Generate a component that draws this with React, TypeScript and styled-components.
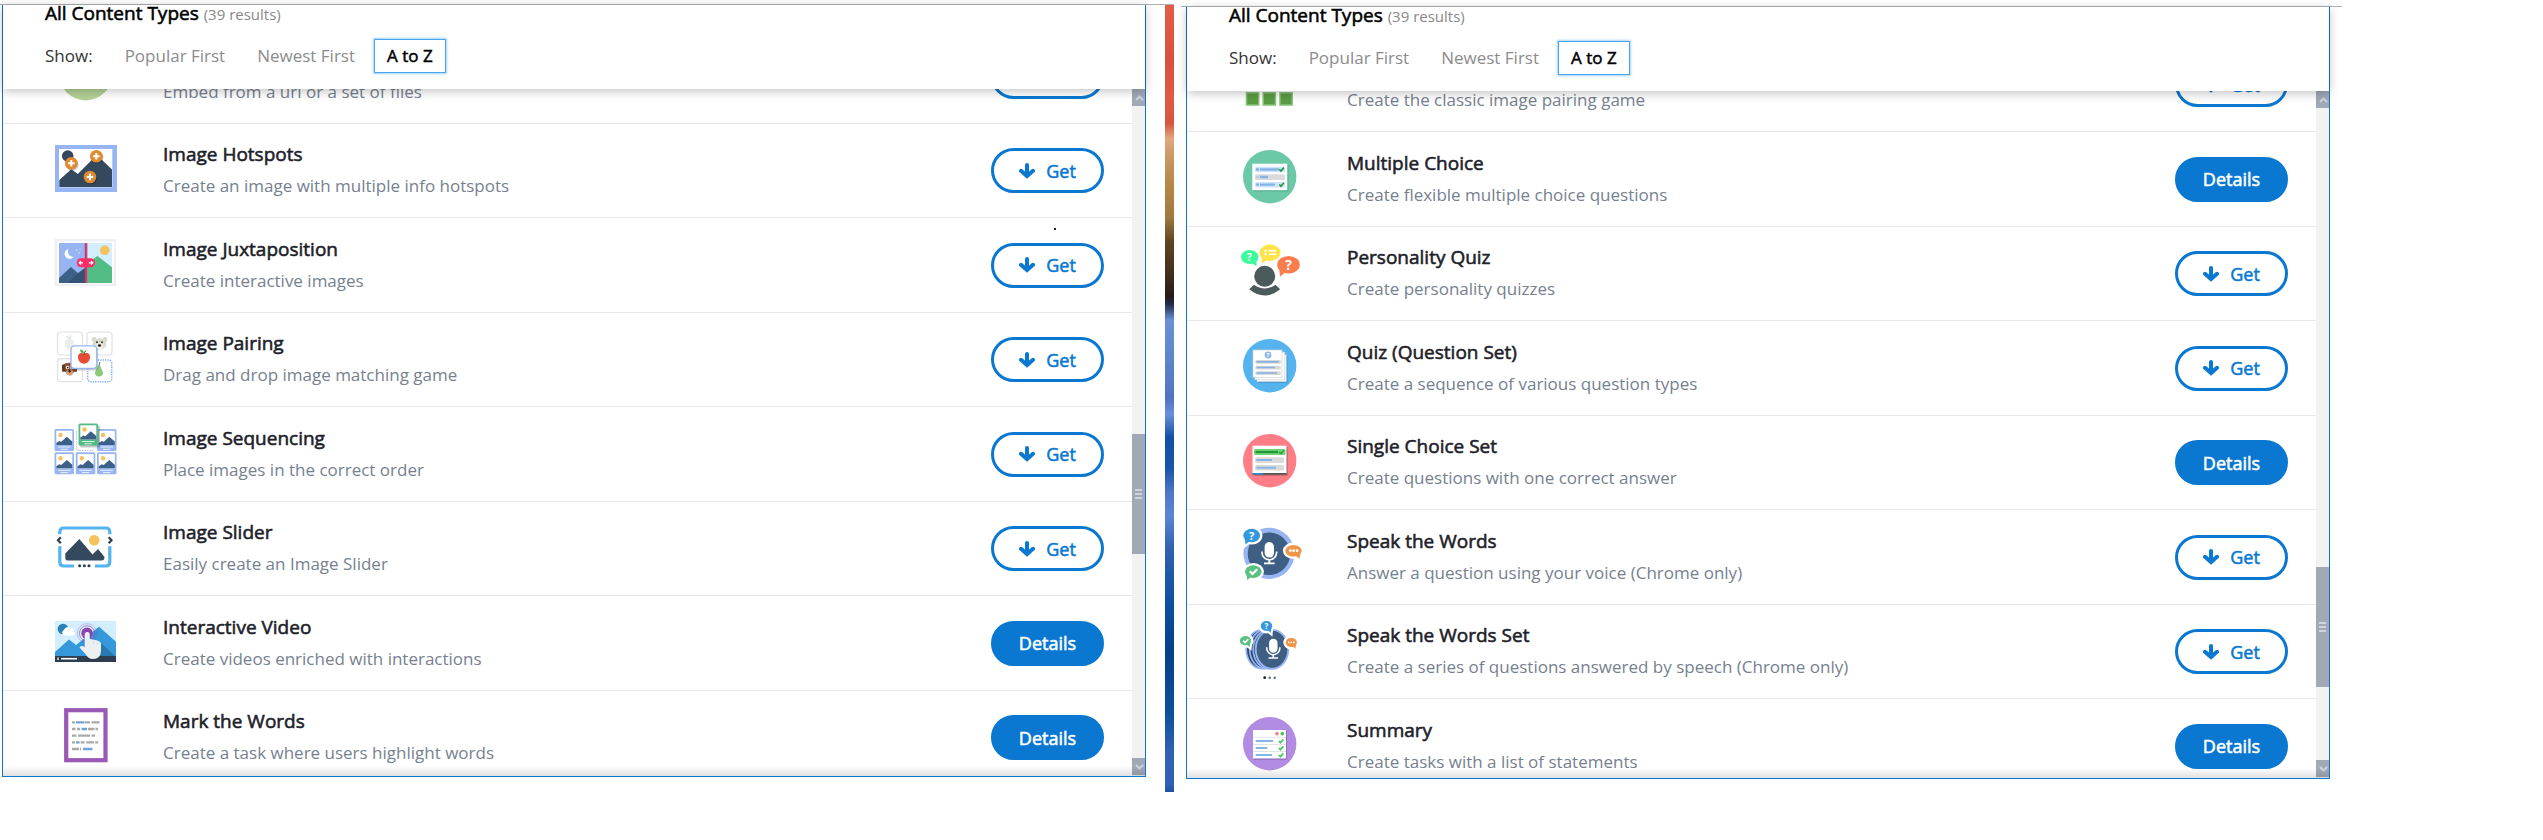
import React from 'react';
import styled, { createGlobalStyle, css } from 'styled-components';

const BLUE = '#0a78d1';
const SKY = '#97b5f3';
const NAVY = '#34495e';
const SUN = '#f5c25c';

const GlobalStyle = createGlobalStyle`
  *, *::before, *::after { box-sizing: border-box; }
  body {
    margin: 0;
    background: #fff;
    font-family: "Open Sans", "Noto Sans", sans-serif;
    color: #1d2129;
  }
  h2, h3, p, ul { margin: 0; padding: 0; }
  button { font-family: inherit; margin: 0; cursor: pointer; }
`;

/* Regular glyphs thickened by a thin outline, lighter than the semibold cut. */
const emphasis = css`
  font-weight: 400;
  -webkit-text-stroke: 0.03em currentColor;
`;

/* ---------- page frame ---------- */

const Page = styled.main`
  display: grid;
  grid-template-columns: 1174fr 7px 1161fr 201fr;
  height: 100vh;
  padding: 4px 0 48px;
`;

const Shot = styled.section`
  display: flex;
  min-width: 0;
  min-height: 0;
  border-top: 1px solid #b0b0b0;
`;

const LeftShot = styled(Shot)`
  grid-column: 1;
  padding-left: 2px;
`;

const RightShot = styled(Shot)`
  grid-column: 3;
  margin: 2px 0 -2px;
  padding: 0 12px 0 5px;
`;

const PhotoEdge = styled.div`
  width: 9px;
  margin-left: 19px;
  background: linear-gradient(
    to bottom,
    #e55c45 0%, #d9503f 7%, #e05a45 12%, #d6553f 15%, #e2a880 17%, #cc9a66 19%,
    #b58545 23%, #a07a40 27%, #5f4520 30%, #43301c 34%, #281a1b 37%, #1f2c48 38%,
    #6a90d5 40%, #5f88cc 44%, #5075c0 50%, #6a90dc 52%, #0f50a2 55%, #1a56a8 59%,
    #5078c8 62%, #5a85d5 65%, #3062b0 69%, #0c50a0 76%, #04408a 82%, #0c509a 90%,
    #3062b4 95%, #2f60b5 99%, #2050a0 100%
  );
`;

/* ---------- content type browser ---------- */

const Panel = styled.div`
  position: relative;
  display: flex;
  flex: 1;
  flex-direction: column;
  min-width: 0;
  margin-bottom: 15px;
  border: 1px solid ${BLUE};
  border-top: 0;

  &::after {
    content: '';
    position: absolute;
    inset: auto 0 0;
    height: 10px;
    background: linear-gradient(to bottom, rgba(0, 0, 0, 0), rgba(0, 0, 0, 0.12));
    pointer-events: none;
  }
`;

const Header = styled.header`
  position: relative;
  z-index: 1;
  padding: 0 42px 16px;
  background: #fff;
  box-shadow: 0 2px 10px rgba(0, 0, 0, 0.25);
`;

const Heading = styled.h2`
  height: 16px;
  font-size: 19px;
  line-height: 16px;
  color: #000;
  ${emphasis}
`;

const Count = styled.span`
  font-size: 15px;
  line-height: 12px;
  color: #888;
  -webkit-text-stroke: 0;
`;

const SortBar = styled.div`
  display: flex;
  align-items: center;
  gap: 6px;
  margin-top: 18px;
  font-size: 17px;
  line-height: 24px;
`;

const SortLabel = styled.span`
  margin-right: 13px;
  color: #333;
`;

const SortButton = styled.button<{ $active?: boolean }>`
  height: 34px;
  padding: 0 12px;
  border: 1px solid transparent;
  background: none;
  font-size: 17px;
  line-height: 24px;
  color: #8c8c8c;
  ${({ $active }) =>
    $active &&
    css`
      border-color: #4aa5f0;
      box-shadow: 0 0 2px 1px #a5d3fa;
      color: #000;
      ${emphasis}
    `}
`;

const Viewport = styled.div`
  display: flex;
  flex: 1;
  min-height: 0;
  overflow: hidden;
`;

const List = styled.ul<{ $offset: number; $rows: string }>`
  display: grid;
  grid-auto-rows: ${({ $rows }) => $rows};
  flex: 1;
  min-width: 0;
  margin-top: ${({ $offset }) => -$offset}px;
  list-style: none;
`;

const Row = styled.li`
  display: flex;
  align-items: center;
  padding: 0 28px 0 52px;
  border-bottom: 1px solid #e9e9eb;
`;

const Icon = styled.svg`
  flex: none;
  width: 62px;
  height: 62px;
  margin: 0 46px 4px 0;
  overflow: visible;
`;

const Info = styled.div`
  flex: 1;
  min-width: 0;
`;

const Title = styled.h3`
  font-size: 19px;
  line-height: 30px;
  color: #1d2129;
  ${emphasis}
`;

const Description = styled.p`
  font-size: 17px;
  line-height: 33px;
  color: #76818f;
`;

const Action = styled.button<{ $filled?: boolean }>`
  display: flex;
  align-items: center;
  justify-content: center;
  gap: 11px;
  width: 113px;
  height: 45px;
  padding: 0;
  border: 3px solid ${BLUE};
  border-radius: 23px;
  background: ${({ $filled }) => ($filled ? BLUE : '#fff')};
  font-size: 18px;
  color: ${({ $filled }) => ($filled ? '#fff' : BLUE)};
  ${emphasis}
`;

const StrayDot = styled.i`
  position: absolute;
  top: 223px;
  right: 89px;
  width: 2px;
  height: 2px;
  background: #222;
`;

/* ---------- scroll bar ---------- */

const Scrollbar = styled.div`
  display: flex;
  flex-direction: column;
  width: 13px;
  padding-bottom: 1px;
  background: #f2f2f2;
`;

const ScrollButton = styled.button`
  display: flex;
  align-items: center;
  justify-content: flex-end;
  width: 13px;
  height: 17px;
  padding: 0 1px;
  border: 0;
  background: #a2a9b5;
`;

const Track = styled.div<{ $grow: number }>`
  flex: ${({ $grow }) => $grow} 1 0;
`;

const Thumb = styled.div`
  display: flex;
  flex: 120 1 0;
  flex-direction: column;
  align-items: center;
  justify-content: center;
  gap: 2px;
  background: #a2a9b5;
`;

const Grip = styled.span`
  width: 7px;
  height: 2px;
  background: #ced3de;
`;

/* ---------- icons ---------- */

const Plus = ({ x, y }: { x: number; y: number }) => (
  <g>
    <circle cx={x + 0.7} cy={y + 0.9} r="6.4" fill="#000" opacity=".25" />
    <circle cx={x} cy={y} r="6.3" fill="#e08a32" />
    <path d={`M${x - 3.3} ${y}h6.6M${x} ${y - 3.3}v6.6`} stroke="#fff" strokeWidth="2" />
  </g>
);

const Check = ({ x, y, c = '#fff', w = 1.6 }: { x: number; y: number; c?: string; w?: number }) => (
  <path d={`M${x - 2.2} ${y}l1.6 1.7 3-3.4`} fill="none" stroke={c} strokeWidth={w} />
);

const Mark = ({ x, y, size, c = '#fff' }: { x: number; y: number; size: number; c?: string }) => (
  <text x={x} y={y} fontSize={size} fontWeight="700" textAnchor="middle" fill={c}>?</text>
);

const Disc = ({ c }: { c: string }) => <circle cx="30.7" cy="30.7" r="26.7" fill={c} />;

const Bubble = ({ x, y, rx, ry, c, tail, ring }: {
  x: number; y: number; rx: number; ry: number; c: string; tail: 'l' | 'r'; ring?: boolean;
}) => {
  const s = tail === 'l' ? -1 : 1;
  const d = `M${x} ${y + ry * 0.6}L${x + s * rx * 0.75} ${y + ry * 1.35}L${x + s * rx * 0.85} ${y}Z`;
  return (
    <g>
      {ring && <ellipse cx={x} cy={y} rx={rx + 2.4} ry={ry + 2.4} fill="#fff" />}
      {ring && <path d={d} fill="#fff" stroke="#fff" strokeWidth="4" />}
      <path d={d} fill={c} />
      <ellipse cx={x} cy={y} rx={rx} ry={ry} fill={c} />
    </g>
  );
};

const Photo = ({ x, y, c = SKY }: { x: number; y: number; c?: string }) => (
  <g transform={`translate(${x} ${y})`}>
    <rect width="19.5" height="22" rx="1.5" fill={c} />
    <rect x="1.8" y="1.8" width="16" height="14.2" fill="#fff" />
    <circle cx="6" cy="6" r="2.2" fill={SUN} />
    <path d="M1.8 14l3-2 2 .8 5.5-5 5.5 4.6V16h-16z" fill="#3d6086" />
    <path d="M3.5 18h12.5M6 20.3h7.5" stroke="#fff" strokeWidth="1" opacity=".8" />
  </g>
);

const Mic = ({ x, y, k }: { x: number; y: number; k: number }) => (
  <g transform={`translate(${x} ${y}) scale(${k})`} fill="none" stroke="#fff">
    <rect x="-4.7" y="0" width="9.4" height="15.6" rx="4.7" fill="#fff" stroke="none" />
    <path d="M-7.3 9.5v1a7.3 7.3 0 0 0 14.6 0v-1" strokeWidth="1.7" />
    <path d="M0 17.8v3.5M-5.3 21.4h10.6" strokeWidth="1.8" />
  </g>
);

const Dots = ({ x, y, gap, r, c }: { x: number; y: number; gap: number; r: number; c: string }) => (
  <g fill={c}>
    <circle cx={x - gap} cy={y} r={r} />
    <circle cx={x} cy={y} r={r} />
    <circle cx={x + gap} cy={y} r={r} />
  </g>
);

const art: Record<string, React.ReactNode> = {
  iframe: <Disc c="#b3d195" />,
  hotspots: (
    <>
      <rect x="0" y="7" width="62" height="47" fill={SKY} />
      <rect x="4" y="11" width="53.3" height="38.3" fill="#fff" />
      <circle cx="12.7" cy="18" r="5.8" fill={NAVY} />
      <path d="M4.3 42L16.3 31.3l6.5 4.6L41.7 17 57 31.5V49H4.3z" fill={NAVY} />
      <Plus x={16.3} y={25.3} />
      <Plus x={41.3} y={18.3} />
      <Plus x={35} y={39} />
    </>
  ),
  juxtaposition: (
    <>
      <rect x="-.5" y="7" width="61.5" height="47" fill="#eff0f6" />
      <rect x="2.2" y="9.5" width="56.5" height="42.2" fill="#fff" />
      <rect x="4" y="11" width="27" height="40" fill={SKY} />
      <rect x="31" y="11" width="26" height="40" fill="#d3efff" />
      <path d="M13.5 17a5 5 0 1 0 5 8 5.5 5.5 0 0 1-5-8z" fill="#fff" />
      <g fill="#e4ecfc">
        <circle cx="21.5" cy="18" r=".8" />
        <circle cx="24" cy="21" r=".7" />
        <circle cx="25" cy="17" r=".5" />
      </g>
      <circle cx="49.7" cy="18.3" r="4.8" fill={SUN} />
      <path d="M4 46l12-11 7 6.3 7.5-5.5V51H4z" fill="#3d6086" />
      <path d="M13 51l10-9.7 7.5-5.5V51z" fill="#345276" />
      <path d="M31.5 32l11-8L57 35.3V51H31.5z" fill="#52bc85" />
      <path d="M31.8 11v40" stroke="#888" strokeWidth="2" opacity=".6" />
      <path d="M30.8 11v40" stroke="#e02860" strokeWidth="2" />
      <rect x="21.7" y="26.3" width="18.4" height="9" rx="4.5" fill="#ff2d64" />
      <path d="M28 30.8h-3.8M26 29l-1.8 1.8 1.8 1.8M33.8 30.8h3.8M36 29l1.8 1.8-1.8 1.8" fill="none" stroke="#fff" strokeWidth="1.2" />
    </>
  ),
  pairing: (
    <>
      <g fill="#fff" stroke="#e0e0e0" strokeWidth="1.2">
        <rect x="2.5" y="5" width="25" height="23" rx="3.5" />
        <rect x="32" y="5" width="25" height="23" rx="3.5" />
        <rect x="2.5" y="31.7" width="25" height="23" rx="3.5" />
      </g>
      <ellipse cx="14.5" cy="17" rx="5" ry="5.3" fill="#eceeec" />
      <path d="M14.5 12l-3-3M14.5 12l1.5-3.5" stroke="#dfe4df" strokeWidth="1.6" />
      <g fill="#d9dad0">
        <circle cx="39" cy="12.5" r="2.4" />
        <circle cx="50" cy="12.5" r="2.4" />
        <ellipse cx="44.5" cy="17" rx="6.8" ry="5.8" />
      </g>
      <ellipse cx="44.5" cy="19.5" rx="3.4" ry="3.2" fill="#f3f3ec" />
      <g fill="#222">
        <circle cx="42" cy="15.2" r=".9" />
        <circle cx="47" cy="15.2" r=".9" />
        <ellipse cx="44.5" cy="18.5" rx="1.7" ry="1.2" />
      </g>
      <path d="M7 38q7-4.5 15 0v6l-3 1q-4 7-8.5 0L7 44z" fill="#8d5132" />
      <path d="M7 38h3v6l-2.5 1zM22 38h-3v6l2.5 1z" fill="#64371f" />
      <g fill="#fff"><circle cx="12.5" cy="40.5" r="1.7" /><circle cx="16.7" cy="40.5" r="1.7" /></g>
      <g fill="#222"><circle cx="12.7" cy="40.6" r=".9" /><circle cx="16.5" cy="40.6" r=".9" /></g>
      <ellipse cx="14.6" cy="45.5" rx="3.6" ry="2.6" fill="#d6a380" />
      <circle cx="14.6" cy="44.2" r="1.2" fill="#2c1a14" />
      <rect x="32.7" y="33" width="24" height="21.7" rx="3" fill="#fff" stroke="#7fb0ea" strokeWidth="1.5" strokeDasharray="1.3 1.1" />
      <path d="M44 38.5c2 0 2 3 3 4.5 2.5 4 0 6.5-3 6.5s-5.5-2.5-3-6.5c1-1.5 1-4.5 3-4.5z" fill="#8cc979" />
      <path d="M44 39l.8-4" stroke="#4f8a45" strokeWidth="1" />
      <rect x="16.8" y="20" width="26.4" height="23.4" rx="3.5" fill="#000" opacity=".18" />
      <rect x="16" y="18.9" width="25.8" height="22.6" rx="3.5" fill="#fff" stroke={SKY} strokeWidth="1.4" />
      <path d="M29 27c3-2 6-.5 6 3 0 4-3 6.7-6 6.7s-6-2.7-6-6.7c0-3.5 3-5 6-3z" fill="#e84c37" />
      <path d="M29 28q0-3 2-4.5" fill="none" stroke="#5b3a26" strokeWidth="1" />
      <path d="M29 26.5q-3.8-.2-4-4 3.8.2 4 4z" fill="#56b357" />
    </>
  ),
  sequencing: (
    <>
      <Photo x={-0.5} y={8} />
      <Photo x={42} y={8} />
      <path d="M21.5 10v19.5h18" fill="none" stroke="#c4c4c4" strokeDasharray="1.5 1" />
      <Photo x={-0.5} y={31.3} />
      <Photo x={20.8} y={31.3} />
      <Photo x={42} y={31.3} />
      <rect x="25" y="4.5" width="20" height="22" rx="1.5" fill="#000" opacity=".22" />
      <Photo x={23.5} y={2.5} c="#52bc85" />
    </>
  ),
  slider: (
    <>
      <g fill="none" stroke="#55b3ee" strokeWidth="3.2">
        <path d="M4.8 18.3V16q0-4 4-4h42q4 0 4 4v2.3" />
        <path d="M4.8 30.3V46q0 4 4 4H19M54.8 30.3V46q0 4-4 4H40" />
      </g>
      <path d="M5.8 21.3L3 24.3l2.8 3M53.7 21.3l2.8 3-2.8 3" fill="none" stroke="#2c3e50" strokeWidth="2.2" />
      <path d="M10.3 37.5L24.3 23 37.5 38.5 43 33l6.5 8q0 3.5-3 3.5H13q-2.7 0-2.7-2.5z" fill={NAVY} />
      <circle cx="39.2" cy="24.3" r="5.3" fill={SUN} />
      <Dots x={29.3} y={49.7} gap={4.7} r={1.5} c="#2c3e50" />
    </>
  ),
  video: (
    <>
      <rect x="0" y="11" width="61" height="41" fill="#d3efff" />
      <path d="M0 42l14-12.5 7 5.5L44 16.7l17 15V47H0z" fill="#3498db" />
      <path d="M46 33l15 14H40z" fill="#2877ad" />
      <rect x="0" y="46" width="61" height="6" fill="#2c3e50" />
      <path d="M6 48.7h16" stroke="#fff" strokeWidth="1.6" />
      <path d="M3 47.5v2.6" stroke="#fff" strokeWidth="1.3" />
      <circle cx="8" cy="19" r="5.3" fill="#2980b9" />
      <path d="M9 25.5a3 3 0 0 1 0-5.5 3.8 3.8 0 0 1 6.5-1.5 3 3 0 0 1 3.5 3 2.2 2.2 0 0 1-.5 4z" fill="#fff" />
      <g fill="none" stroke="#8e44ad">
        <circle cx="32" cy="23.3" r="9.7" opacity=".3" />
        <circle cx="32" cy="23.3" r="7.6" opacity=".6" />
      </g>
      <circle cx="32" cy="23.3" r="5.7" fill="#8e44ad" />
      <path d="M29.7 24.5a2.5 2.5 0 0 1 5 0V29q10 1 11.3 4v8q-.5 8-8 8-5 0-7.5-5l-6-6.5q1-2.5 4.5-1l.7 1z" fill="#ecf0f1" />
      <path d="M38.5 31v3M42.3 32v3" stroke="#d5dadd" strokeWidth=".8" />
    </>
  ),
  words: (
    <>
      <rect x="11.2" y="5.2" width="39.3" height="50" fill="#fff" stroke="#9b59b6" strokeWidth="4.2" />
      <g stroke="#a9a9a9" strokeWidth="2.3">
        <path d="M17 17.3h28" strokeDasharray="3 10 5 1.5 8 3" />
        <path d="M17 24h26" strokeDasharray="3.5 1.5 3 8 6.5 1" />
        <path d="M17 30.7h23" strokeDasharray="4.5 1.5 12 1.5" />
        <path d="M17 37.3h27.5" strokeDasharray="3 5.7 4 1.5 8 1" />
        <path d="M17 44h9" strokeDasharray="7 1" />
      </g>
      <path d="M21 17.3h8.5M26.5 24h5.5M21 37.3h3.5M28 44h9.5" stroke="#6fa3d8" strokeWidth="2.3" />
    </>
  ),
  memory: (
    <g fill="#5a9c43" stroke="#86c276" strokeWidth="1.5">
      {[7.5, 24.2, 41].map((x) => (
        <React.Fragment key={x}>
          <rect x={x} y="8" width="12.2" height="12.2" />
          <rect x={x} y="24.4" width="12.2" height="12.2" />
          <rect x={x} y="40.8" width="12.2" height="12.2" />
        </React.Fragment>
      ))}
    </g>
  ),
  multiple: (
    <>
      <Disc c="#6cc9a8" />
      <rect x="14.5" y="19" width="35" height="26.5" fill="#4f9f83" opacity=".6" />
      <rect x="13.3" y="17.7" width="35" height="26.5" fill="#fff" />
      <rect x="16" y="20.8" width="30" height="5.4" rx="1.5" fill="#cfe4fa" />
      <rect x="16" y="28.3" width="30" height="5.6" rx="1.5" fill="#dadada" />
      <rect x="16" y="36" width="30" height="5.4" rx="1.5" fill="#cfe4fa" />
      <path d="M17 23.5h3M21 23.5h19M21 31h8M17 38.7h3M21 38.7h15" stroke="#86b4e6" strokeWidth="2.3" />
      <path d="M17.2 31h2.5" stroke="#b9c9dc" strokeWidth="2" />
      <Check x={42.5} y={23.3} c="#1f9a32" />
      <Check x={42.5} y={38.5} c="#1f9a32" />
    </>
  ),
  personality: (
    <>
      <Bubble x={10.7} y={16} rx={8.7} ry={6.9} c="#3dfa9a" tail="r" />
      <Bubble x={31} y={11.7} rx={10.5} ry={8.2} c="#ffe44b" tail="l" />
      <Bubble x={49.5} y={23.7} rx={11.3} ry={8.8} c="#fa7d4d" tail="l" />
      <Mark x={10.5} y={20} size={10} />
      <Mark x={49.5} y={28.5} size={14} />
      <path d="M29.5 9.7h7.5M29.5 13.2h7.5" stroke="#fff" strokeWidth="1.5" />
      <path d="M25.5 9.7h2.2M25.5 13.2h2.2" stroke="#fff" strokeWidth="2" />
      <circle cx="25.7" cy="35.3" r="10.5" fill="#4b5a5a" />
      <path d="M15 43.8q10.7 7.5 21.5 0l4.7 4.5q-15.5 12.5-31 0z" fill="#4b5a5a" />
    </>
  ),
  quiz: (
    <>
      <Disc c="#55b3ee" />
      <rect x="19" y="20.5" width="29.5" height="27.5" fill="#3c87b8" opacity=".6" />
      <rect x="18" y="19.7" width="29.5" height="27" fill="#f2f2f2" />
      <rect x="16" y="17.2" width="29.5" height="27.5" fill="#fff" stroke="#dcdcdc" strokeWidth=".7" />
      <rect x="14" y="15" width="29" height="27.3" fill="#fff" stroke="#d2d2d2" strokeWidth=".7" />
      <circle cx="29" cy="20" r="3.4" fill="#8fb6e6" />
      <Mark x={29} y={22.4} size={6} />
      {[25, 30.7, 36.2].map((y) => (
        <rect key={y} x="16.3" y={y} width="25.5" height="3.8" rx="1.2" fill="#d8d8d8" />
      ))}
      <path d="M17.5 26.8h22M17.5 32.5h18.5M17.5 38h20.5" stroke="#86b0e2" strokeWidth="1.7" />
    </>
  ),
  single: (
    <>
      <Disc c="#ff7d87" />
      <rect x="14.5" y="17" width="34" height="28.5" fill="#6a4a52" opacity=".6" />
      <rect x="13.5" y="15.7" width="34" height="27.8" fill="#fff" />
      <rect x="15" y="19" width="31.5" height="6" rx="1.5" fill="#72d178" />
      <path d="M16.5 22H39" stroke="#1f9a32" strokeWidth="2.2" />
      <Check x={42.5} y={22} c="#1f9a32" w={1.2} />
      <rect x="16" y="27.3" width="29" height="5.7" rx="1.5" fill="#dadada" />
      <rect x="16" y="35" width="29" height="5.5" rx="1.5" fill="#dadada" />
      <path d="M17.5 30.1H33M17.5 37.7H37" stroke="#86b4e6" strokeWidth="2" />
      <path d="M13.5 43.8h34" stroke="#555" strokeWidth="1.5" />
      <path d="M13.5 43.8H24" stroke="#2e8fe0" strokeWidth="1.5" />
    </>
  ),
  speak: (
    <>
      <circle cx="30" cy="29.3" r="25.6" fill={SKY} />
      <circle cx="30" cy="29.7" r="21.3" fill="#3f5e84" />
      <Mic x={30.3} y={18} k={1} />
      <Bubble x={12.7} y={11.5} rx={8.4} ry={6.7} c="#3498db" tail="l" ring />
      <Bubble x={54.5} y={26.8} rx={8.2} ry={5.8} c="#ee9648" tail="r" ring />
      <Bubble x={14.3} y={47.6} rx={8.3} ry={6.3} c="#5bc182" tail="l" ring />
      <Mark x={12.7} y={15.5} size={11} />
      <Dots x={54.7} y={26.7} gap={3.4} r={1.4} c="#fff" />
      <path d="M10.8 47.3l2.7 2.7 4.7-4.7" fill="none" stroke="#fff" strokeWidth="2.2" />
    </>
  ),
  speakset: (
    <>
      {[22.5, 26, 29.5].map((x) => (
        <ellipse key={x} cx={x} cy="30.3" rx="15.3" ry="19.3" fill="#2f486a" stroke={SKY} strokeWidth="1.7" />
      ))}
      <ellipse cx="33" cy="30.3" rx="16.3" ry="19.5" fill="#3f5e84" stroke={SKY} strokeWidth="1.9" />
      <Mic x={34.3} y={19.7} k={0.9} />
      <Bubble x={27.5} y={7} rx={5.7} ry={5} c="#3498db" tail="r" ring />
      <Bubble x={6.5} y={21.7} rx={5.7} ry={4.6} c="#5bc182" tail="r" ring />
      <Bubble x={52.3} y={23.5} rx={5.6} ry={4.6} c="#ee9648" tail="r" ring />
      <Mark x={27.5} y={10} size={8} />
      <Dots x={52.3} y={23.3} gap={2.5} r={0.9} c="#fff" />
      <path d="M4 21.6l2 2 3.3-3.5" fill="none" stroke="#fff" strokeWidth="1.6" />
      <circle cx="25.7" cy="58.7" r="1.4" fill="#222" />
      <circle cx="30.7" cy="58.7" r="1.2" fill="#5a6b80" />
      <circle cx="35.7" cy="58.7" r="1.2" fill="#5a6b80" />
    </>
  ),
  summary: (
    <>
      <Disc c="#b28be2" />
      <rect x="14.7" y="18" width="33" height="28.5" fill="#8463ac" />
      <rect x="14" y="17" width="33" height="28.5" fill="#fff" />
      <circle cx="38" cy="20.7" r="1.9" fill="#ee8a92" />
      <circle cx="43.3" cy="20.7" r="1.9" fill="#4fc96d" />
      <path d="M14 24.3h33M14 31.5h33M14 38.5h33" stroke="#e3e3e3" />
      <path d="M16.7 28H34M16.7 35h11.5M16.7 42H33" stroke="#86b4e6" strokeWidth="2.2" />
      {[28, 35, 42].map((y) => <Check key={y} x={42} y={y} c="#4fc96d" w={1.8} />)}
    </>
  ),
};

const DownArrow = () => (
  <svg width="16" height="16" viewBox="0 0 16 16" aria-hidden="true">
    <path d="M8 2v10M2 7.8L8 13l6-5.2" fill="none" stroke={BLUE} strokeWidth="4" strokeLinecap="round" />
  </svg>
);

/* ---------- data ---------- */

type Item = { icon: string; title: string; text: string; installed?: boolean };

const firstItems: Item[] = [
  { icon: 'iframe', title: 'Iframe Embedder', text: 'Embed from a url or a set of files' },
  { icon: 'hotspots', title: 'Image Hotspots', text: 'Create an image with multiple info hotspots' },
  { icon: 'juxtaposition', title: 'Image Juxtaposition', text: 'Create interactive images' },
  { icon: 'pairing', title: 'Image Pairing', text: 'Drag and drop image matching game' },
  { icon: 'sequencing', title: 'Image Sequencing', text: 'Place images in the correct order' },
  { icon: 'slider', title: 'Image Slider', text: 'Easily create an Image Slider' },
  { icon: 'video', title: 'Interactive Video', text: 'Create videos enriched with interactions', installed: true },
  { icon: 'words', title: 'Mark the Words', text: 'Create a task where users highlight words', installed: true },
];

const secondItems: Item[] = [
  { icon: 'memory', title: 'Memory Game', text: 'Create the classic image pairing game' },
  { icon: 'multiple', title: 'Multiple Choice', text: 'Create flexible multiple choice questions', installed: true },
  { icon: 'personality', title: 'Personality Quiz', text: 'Create personality quizzes' },
  { icon: 'quiz', title: 'Quiz (Question Set)', text: 'Create a sequence of various question types' },
  { icon: 'single', title: 'Single Choice Set', text: 'Create questions with one correct answer', installed: true },
  { icon: 'speak', title: 'Speak the Words', text: 'Answer a question using your voice (Chrome only)' },
  { icon: 'speakset', title: 'Speak the Words Set', text: 'Create a series of questions answered by speech (Chrome only)' },
  { icon: 'summary', title: 'Summary', text: 'Create tasks with a list of statements', installed: true },
];

type BrowserProps = { items: Item[]; offset: number; rows: string; before: number; after: number; dot?: boolean };

const Browser = ({ items, offset, rows, before, after, dot }: BrowserProps) => (
  <Panel>
    <Header>
      <Heading>All Content Types <Count>(39 results)</Count></Heading>
      <SortBar role="group" aria-label="Show">
        <SortLabel>Show:</SortLabel>
        <SortButton type="button">Popular First</SortButton>
        <SortButton type="button">Newest First</SortButton>
        <SortButton type="button" $active aria-pressed="true">A to Z</SortButton>
      </SortBar>
    </Header>
    <Viewport>
      <List $offset={offset} $rows={rows}>
        {items.map((item) => (
          <Row key={item.title}>
            <Icon viewBox="0 0 62 62" aria-hidden="true">{art[item.icon]}</Icon>
            <Info>
              <Title>{item.title}</Title>
              <Description>{item.text}</Description>
            </Info>
            {item.installed ? (
              <Action type="button" $filled>Details</Action>
            ) : (
              <Action type="button"><DownArrow />Get</Action>
            )}
          </Row>
        ))}
      </List>
      <Scrollbar>
        <ScrollButton type="button" aria-label="Scroll up">
          <svg width="9" height="6" viewBox="0 0 9 6"><path d="M1 5l3.5-3.5L8 5" fill="none" stroke="#ced3de" strokeWidth="2" /></svg>
        </ScrollButton>
        <Track $grow={before} />
        <Thumb><Grip /><Grip /><Grip /></Thumb>
        <Track $grow={after} />
        <ScrollButton type="button" aria-label="Scroll down">
          <svg width="9" height="6" viewBox="0 0 9 6"><path d="M1 1l3.5 3.5L8 1" fill="none" stroke="#ced3de" strokeWidth="2" /></svg>
        </ScrollButton>
      </Scrollbar>
    </Viewport>
    {dot && <StrayDot />}
  </Panel>
);

export default function App() {
  return (
    <>
      <GlobalStyle />
      <Page>
        <LeftShot>
          <Browser items={firstItems} offset={60} rows="95px 94px" before={328} after={204} dot />
          <PhotoEdge />
        </LeftShot>
        <RightShot>
          <Browser items={secondItems} offset={53} rows="94px 95px" before={459} after={73} />
        </RightShot>
      </Page>
    </>
  );
}
